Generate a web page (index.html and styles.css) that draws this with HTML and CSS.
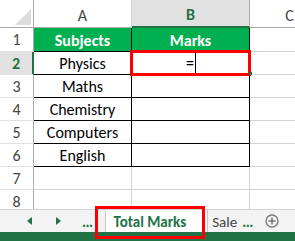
FILE: index.html
```html
<!DOCTYPE html>
<html lang="en">
<head>
    <meta charset="UTF-8">
    <title>Total Marks</title>
    <link rel="stylesheet" href="styles.css">
</head>
<body>
    <div class="sheet">
        <div class="grid">
            <!-- column headers -->
            <div class="corner">
                <svg width="33" height="27" viewBox="0 0 33 27"><polygon points="15,25 31,25 31,9" fill="#dcdcdc"/></svg>
            </div>
            <div class="col-head">A</div>
            <div class="col-head active">B</div>
            <div class="col-head">C</div>

            <!-- row 1 -->
            <div class="row-head">1</div>
            <div class="cell title">Subjects</div>
            <div class="cell title">Marks</div>
            <div class="cell"></div>

            <!-- row 2 -->
            <div class="row-head active">2</div>
            <div class="cell boxed">Physics</div>
            <div class="cell boxed editing"><span>=</span><span class="caret"></span></div>
            <div class="cell"></div>

            <div class="row-head">3</div>
            <div class="cell boxed">Maths</div>
            <div class="cell boxed"></div>
            <div class="cell"></div>

            <div class="row-head">4</div>
            <div class="cell boxed">Chemistry</div>
            <div class="cell boxed"></div>
            <div class="cell"></div>

            <div class="row-head">5</div>
            <div class="cell boxed">Computers</div>
            <div class="cell boxed"></div>
            <div class="cell"></div>

            <div class="row-head">6</div>
            <div class="cell boxed">English</div>
            <div class="cell boxed"></div>
            <div class="cell"></div>

            <div class="row-head">7</div>
            <div class="cell"></div>
            <div class="cell"></div>
            <div class="cell"></div>

            <div class="row-head">8</div>
            <div class="cell"></div>
            <div class="cell"></div>
            <div class="cell"></div>
        </div>
        <div class="mark mark-cell"></div>
        <div class="fill-handle"></div>
    </div>

    <div class="tabbar">
        <span class="nav-arrow left"></span>
        <span class="nav-arrow right"></span>
        <span class="dots">...</span>
        <div class="tab current">Total Marks</div>
        <div class="tab">Sale</div>
        <span class="dots">...</span>
        <svg class="add-sheet" width="14" height="14" viewBox="0 0 14 14">
            <circle cx="7" cy="7" r="6" fill="none" stroke="#777" stroke-width="1.3"/>
            <path d="M7 3.5v7M3.5 7h7" stroke="#777" stroke-width="1.5"/>
        </svg>
        <div class="mark mark-tab"></div>
    </div>

    <div class="statusbar"></div>
</body>
</html>
```

FILE: styles.css
```css
* {
    margin: 0;
    padding: 0;
    box-sizing: border-box;
}

body {
    width: 295px;
    height: 241px;
    overflow: hidden;
    background-color: #fff;
    font-family: Carlito, Lato, 'Liberation Sans', sans-serif;
    color: #000;
}

/* Planilha */
.sheet {
    position: relative;
    height: 209px;
    overflow: hidden;
}

.grid {
    display: grid;
    grid-template-columns: 34px 98px 118px 80px;
    grid-template-rows: 28px 24px repeat(7, 23px);
    width: 330px;
}

.corner {
    border-right: 1px solid #ababab;
    border-bottom: 1px solid #ababab;
}

.corner svg {
    display: block;
}

.col-head {
    display: flex;
    justify-content: center;
    align-items: center;
    padding-top: 3px;
    font-size: 16px;
    color: #444;
    border-right: 1px solid #d4d4d4;
    border-bottom: 1px solid #ababab;
}

.col-head.active {
    background-color: #e1e1e1;
    color: #217346;
    font-weight: bold;
    border-bottom: 2px solid #217346;
    border-right-color: #ababab;
}

.row-head {
    display: flex;
    justify-content: center;
    align-items: center;
    font-size: 16px;
    color: #444;
    border-right: 1px solid #ababab;
    border-bottom: 1px solid #e1e1e1;
}

.row-head.active {
    background-color: #e1e1e1;
    color: #217346;
    font-weight: bold;
    border-right: 2px solid #217346;
}

.cell {
    display: flex;
    justify-content: center;
    align-items: center;
    font-size: 16px;
    border-right: 1px solid #d4d4d4;
    border-bottom: 1px solid #d4d4d4;
}

.cell.title {
    background-color: #00b050;
    color: #fff;
    font-weight: bold;
    border-right-color: #000;
    border-bottom-color: #000;
    padding-top: 2px;
}

.cell.boxed {
    border-right-color: #000;
    border-bottom-color: #000;
}

.editing {
    padding-left: 1px;
}

.caret {
    width: 1px;
    height: 20px;
    margin-left: 1px;
    background-color: #000;
}

/* Marcações vermelhas */
.mark {
    position: absolute;
    border: 3px solid #ff0000;
}

.mark-cell {
    left: 130px;
    top: 50px;
    width: 121px;
    height: 26px;
}

.fill-handle {
    position: absolute;
    left: 249px;
    top: 72px;
    width: 3px;
    height: 3px;
    background-color: #217346;
}

/* Abas */
.tabbar {
    position: relative;
    display: flex;
    align-items: stretch;
    height: 23px;
    background-color: #f3f3f3;
    border-top: 1px solid #d4d4d4;
    padding-left: 27px;
}

.nav-arrow {
    align-self: center;
    width: 0;
    height: 0;
    border-top: 4px solid transparent;
    border-bottom: 4px solid transparent;
}

.nav-arrow.left {
    border-right: 5px solid #217346;
    margin-right: 24px;
}

.nav-arrow.right {
    border-left: 5px solid #217346;
}

.dots {
    align-self: center;
    padding-top: 2px;
    font-size: 15px;
    font-weight: bold;
    color: #217346;
    margin-left: 21px;
    letter-spacing: -0.5px;
}

.tab {
    display: flex;
    align-items: center;
    font-size: 15px;
    color: #444;
    padding: 2px 4px 0 4px;
}

.tab.current {
    margin-left: 12px;
    background-color: #fff;
    color: #217346;
    font-weight: bold;
    padding: 2px 21px 0 8px;
    border-left: 1px solid #c6c6c6;
    border-right: 1px solid #c6c6c6;
}

.tabbar .tab + .dots {
    margin-left: 1px;
}

.add-sheet {
    align-self: center;
    margin-left: 12px;
}

.mark-tab {
    left: 95px;
    top: -4px;
    width: 110px;
    height: 33px;
}

.statusbar {
    height: 9px;
    background-color: #217346;
}
```
